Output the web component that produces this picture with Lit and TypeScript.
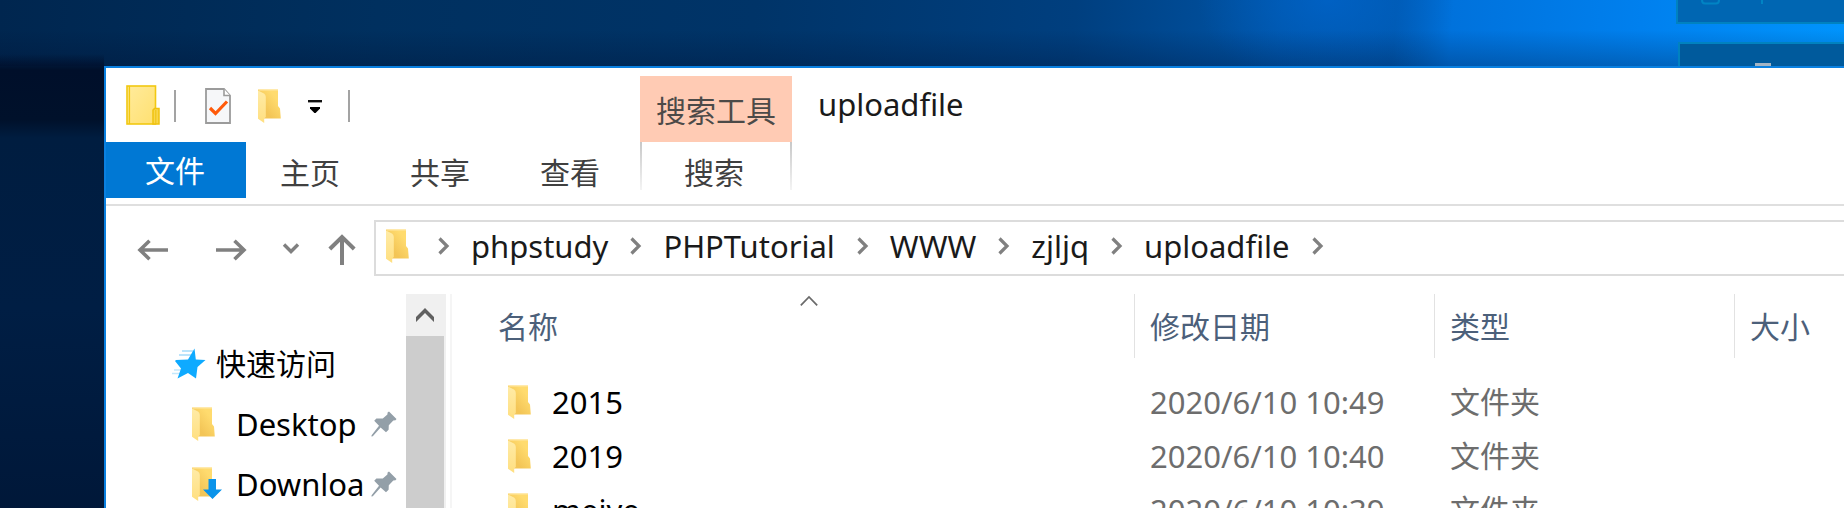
import { LitElement, html, css, svg, nothing } from "lit";
import { customElement, property } from "lit/decorators.js";

interface Entry {
  name: string;
  modified: string;
  type: string;
}

const CRUMBS = ["phpstudy", "PHPTutorial", "WWW", "zjljq", "uploadfile"];

const ENTRIES: Entry[] = [
  { name: "2015", modified: "2020/6/10 10:49", type: "文件夹" },
  { name: "2019", modified: "2020/6/10 10:40", type: "文件夹" },
  { name: "meiye", modified: "2020/6/10 10:39", type: "文件夹" },
];

const reset = css`
  * {
    box-sizing: border-box;
  }
  button {
    font: inherit;
    color: inherit;
    background: none;
    border: 0;
    padding: 0;
    margin: 0;
    display: flex;
    align-items: center;
    justify-content: center;
  }
  svg {
    display: block;
    flex: none;
    overflow: visible;
  }
`;

@customElement("folder-icon")
export class FolderIcon extends LitElement {
  @property({ type: Boolean }) download = false;

  static styles = [
    reset,
    css`
      :host {
        display: block;
        flex: none;
        width: 24px;
        height: 34px;
      }
    `,
  ];

  render() {
    return html`<svg width="24" height="34" viewBox="0 0 24 34" aria-hidden="true">
      <defs>
        <linearGradient id="back" x1="0" y1="1" x2="1" y2="0">
          <stop offset="0.3" stop-color="#f3c557" />
          <stop offset="0.75" stop-color="#ffdb6e" />
        </linearGradient>
        <linearGradient id="flap" x1="0" y1="0" x2="0" y2="1">
          <stop offset="0" stop-color="#ffeba6" />
          <stop offset="1" stop-color="#ffdf80" />
        </linearGradient>
      </defs>
      <path d="M0 0.5H20V17L22 19.5L22.8 29.5H4L0 4Z" fill="url(#back)" />
      <path d="M0 0.5H20V1.6H1Z" fill="#ffe7a4" />
      <path d="M0 1.5L6 4.6Q7.8 5.8 7.8 8V28L6.2 29.6V34L0 29.8Z" fill="url(#flap)" />
      ${this.download
        ? svg`<path d="M16.5 12H24V22.5H30L20.5 32L11 22.5H16.5Z" fill="#0a93ea" />`
        : nothing}
    </svg>`;
  }
}

@customElement("ribbon-bar")
export class RibbonBar extends LitElement {
  static styles = [
    reset,
    css`
      :host {
        display: grid;
        grid-template-columns: 534px 152px 1fr;
        grid-template-rows: 74px 56px;
        padding-bottom: 6px;
        border-bottom: 2px solid #dfdfdf;
      }
      .quick {
        display: flex;
        align-items: center;
        padding: 2px 0 0 20px;
      }
      .sep {
        width: 2px;
        height: 32px;
        margin: 0 16px 0 14px;
        background: #a3a3a3;
      }
      .tool {
        width: 52px;
        height: 48px;
      }
      .more {
        width: 38px;
      }
      .context {
        margin-top: 8px;
        padding-top: 4px;
        display: flex;
        align-items: center;
        justify-content: center;
        background: #ffcbb4;
        color: #4c4a48;
      }
      h1 {
        margin: 0;
        padding: 0 0 2px 26px;
        align-self: center;
        font-size: 31px;
        font-weight: 400;
        line-height: 40px;
        color: #1a1a1a;
      }
      .tabs {
        display: flex;
        color: #404040;
      }
      .tab {
        width: 130px;
        padding: 5px 2px 0 0;
      }
      .file {
        width: 140px;
        padding-top: 2px;
        background: #0078d4;
        color: #fff;
      }
      .search {
        width: 100%;
        padding: 5px 4px 0 0;
        color: #404040;
        background:
          linear-gradient(#c8c8c8, #f4f4f4) left top / 2px 48px no-repeat,
          linear-gradient(#c8c8c8, #f4f4f4) right top / 2px 48px no-repeat;
      }
    `,
  ];

  render() {
    return html`
      <div class="quick">
        <svg width="34" height="40" viewBox="0 0 34 40" aria-hidden="true">
          <defs>
            <linearGradient id="big" x1="0" y1="0" x2="1" y2="1">
              <stop offset="0" stop-color="#ffeb9c" />
              <stop offset="1" stop-color="#ffe070" />
            </linearGradient>
          </defs>
          <rect x="1" y="0" width="28.5" height="38" fill="url(#big)" stroke="#f2c811" stroke-width="1.6" />
          <path d="M3.4 0V38" stroke="#f2c811" stroke-width="1.4" />
          <path d="M27 38V24L28.5 22.6H33V38Z" fill="#f8d64c" stroke="#efc20f" stroke-width="1.5" />
          <path d="M29.8 24V38" stroke="#efc20f" stroke-width="1" />
        </svg>
        <span class="sep"></span>
        <button class="tool" aria-label="属性">
          <svg width="26" height="36" viewBox="0 0 26 36">
            <path d="M1 1H19L25 7.5V35H1Z" fill="#f6f7f9" stroke="#9b9b9b" stroke-width="1.8" />
            <path d="M19 1V7.5H25" fill="#fff" stroke="#9b9b9b" stroke-width="1.6" />
            <path d="M5 20L10.5 25.5L22 13.5" fill="none" stroke="#ff5a0a" stroke-width="3.2" />
          </svg>
        </button>
        <button class="tool" aria-label="新建文件夹"><folder-icon></folder-icon></button>
        <button class="tool more" aria-label="自定义快速访问工具栏">
          <svg width="14" height="14" viewBox="0 0 14 14">
            <path d="M0 2.2H14" stroke="#111" stroke-width="2.4" />
            <path d="M2 8H12V9.5L7.6 14H6.4L2 9.5Z" fill="#000" />
          </svg>
        </button>
        <span class="sep"></span>
      </div>
      <div class="context">搜索工具</div>
      <h1>uploadfile</h1>
      <div class="tabs">
        <button class="tab file">文件</button>
        <button class="tab">主页</button>
        <button class="tab">共享</button>
        <button class="tab">查看</button>
      </div>
      <button class="search">搜索</button>
    `;
  }
}

@customElement("address-bar")
export class AddressBar extends LitElement {
  static styles = [
    reset,
    css`
      :host {
        display: flex;
        padding: 14px 0 0 8px;
      }
      .nav {
        width: 78px;
        padding-top: 4px;
      }
      .recent {
        width: 42px;
        padding: 0;
      }
      .up {
        width: 60px;
        margin-right: 2px;
      }
      nav {
        flex: 1;
        min-width: 0;
        height: 56px;
        display: flex;
        align-items: center;
        padding: 0 0 4px 10px;
        border: 2px solid #dcdcdc;
        border-right: 0;
      }
      folder-icon {
        margin-right: 6px;
      }
      .step {
        width: 55px;
        height: 40px;
      }
      a {
        font-size: 31px;
        line-height: 40px;
        color: #1a1a1a;
        text-decoration: none;
      }
    `,
  ];

  private step() {
    return html`<button class="step" aria-label="展开">
      <svg width="11" height="18" viewBox="0 0 11 18">
        <path d="M1.5 1.5L9 9L1.5 16.5" fill="none" stroke="#808080" stroke-width="3.2" />
      </svg>
    </button>`;
  }

  render() {
    return html`
      <button class="nav" aria-label="返回">
        <svg width="30" height="20" viewBox="0 0 30 20">
          <path d="M30 10H2M11.5 0.8L2 10L11.5 19.2" fill="none" stroke="#808080" stroke-width="3.6" />
        </svg>
      </button>
      <button class="nav" aria-label="前进">
        <svg width="30" height="20" viewBox="0 0 30 20">
          <path d="M0 10H28M18.5 0.8L28 10L18.5 19.2" fill="none" stroke="#808080" stroke-width="3.6" />
        </svg>
      </button>
      <button class="nav recent" aria-label="最近浏览的位置">
        <svg width="16" height="10" viewBox="0 0 16 10">
          <path d="M1 1.5L8 8.5L15 1.5" fill="none" stroke="#808080" stroke-width="3.4" />
        </svg>
      </button>
      <button class="nav up" aria-label="上移">
        <svg width="26" height="30" viewBox="0 0 26 30">
          <path d="M13 30V2M0.8 14L13 2L25.2 14" fill="none" stroke="#808080" stroke-width="4" />
        </svg>
      </button>
      <nav aria-label="地址">
        <folder-icon></folder-icon>
        ${this.step()}${CRUMBS.map((c) => html`<a href="#${c}">${c}</a>${this.step()}`)}
      </nav>
    `;
  }
}

@customElement("side-bar")
export class SideBar extends LitElement {
  static styles = [
    reset,
    css`
      :host {
        display: flex;
        flex: none;
        border-right: 2px solid #f5f5f5;
        padding-right: 4px;
      }
      ul {
        list-style: none;
        margin: 0;
        padding: 40px 9px 0 64px;
        width: 300px;
      }
      li {
        height: 60px;
        display: flex;
        align-items: center;
        color: #000;
      }
      .root {
        gap: 10px;
      }
      .child {
        padding-left: 22px;
        font-size: 31px;
      }
      .label {
        flex: 1;
        min-width: 0;
        margin: 0 6px 0 20px;
        line-height: 40px;
        overflow: hidden;
        white-space: nowrap;
      }
      .scroll {
        width: 40px;
        background: #f0f0f0;
        display: flex;
        flex-direction: column;
      }
      .scroll button {
        height: 42px;
        padding-right: 2px;
      }
      .thumb {
        flex: 1;
        margin-right: 2px;
        background: #cdcdcd;
      }
    `,
  ];

  private child(label: string, download: boolean) {
    return html`<li class="child">
      <folder-icon ?download=${download}></folder-icon>
      <span class="label">${label}</span>
      <svg width="26" height="26" viewBox="0 0 26 26" aria-hidden="true">
        <path
          d="M18 0.5L25.5 8L24.5 9.2L22.3 9.4L17.8 14.2L17.6 18.8L15 21.2L9.6 16.4L1.8 25.2L0.4 25.6L0.6 24.2L8 14.8L3.2 9.8L5.4 7.4L11.8 7.6L16.4 3.6L16.6 1.6Z"
          fill="#939fa8"
        />
      </svg>
    </li>`;
  }

  render() {
    return html`
      <ul>
        <li class="root">
          <svg width="36" height="32" viewBox="0 0 36 32" aria-hidden="true">
            <path d="M12 3H23M9 7H21" stroke="#a5dcfa" stroke-width="1.5" />
            <path d="M4 22H12M2 25.5H10" stroke="#c4e8fc" stroke-width="1.5" />
            <path
              d="M24.5 0.5L25.8 11.5L35.5 12L27.5 19L26 30.5L18 25L7.5 30.5L11 20.5L5 13L6 12L18 11.5Z"
              fill="#0eaaff"
            />
          </svg>
          快速访问
        </li>
        ${this.child("Desktop", false)}${this.child("Downloa", true)}
      </ul>
      <div class="scroll">
        <button aria-label="向上滚动">
          <svg width="18" height="14" viewBox="0 0 18 14">
            <path d="M0 9L9 0L18 9V14L9 5L0 14Z" fill="#606060" />
          </svg>
        </button>
        <div class="thumb"></div>
      </div>
    `;
  }
}

@customElement("file-list")
export class FileList extends LitElement {
  static styles = [
    reset,
    css`
      :host {
        display: block;
        flex: 1;
        min-width: 0;
        padding-left: 31px;
      }
      table {
        width: 100%;
        table-layout: fixed;
        border-collapse: separate;
        border-spacing: 0;
        white-space: nowrap;
      }
      .c-name {
        width: 651px;
      }
      .c-mid {
        width: 300px;
      }
      th {
        position: relative;
        height: 64px;
        padding: 2px 0 0 15px;
        border-left: 1px solid #e2e2e2;
        font-weight: 400;
        text-align: left;
        color: #4c607a;
      }
      th:first-child {
        border-left: 0;
      }
      .sort {
        position: absolute;
        top: 2px;
        left: calc(50% - 9px);
      }
      tbody::before {
        content: "";
        display: block;
        height: 18px;
      }
      td {
        height: 54px;
        padding: 0 0 2px 16px;
        color: #6d6d6d;
        line-height: 40px;
      }
      td:first-child {
        padding-left: 25px;
        color: #000;
      }
      .latin {
        font-size: 31px;
      }
      .entry {
        display: flex;
        align-items: center;
        gap: 20px;
      }
    `,
  ];

  render() {
    return html`<table>
      <colgroup>
        <col class="c-name" />
        <col class="c-mid" />
        <col class="c-mid" />
        <col />
      </colgroup>
      <thead>
        <tr>
          <th aria-sort="ascending">
            名称
            <svg class="sort" width="18" height="10" viewBox="0 0 18 10" aria-hidden="true">
              <path d="M0.8 9.4L9 1L17.2 9.4" fill="none" stroke="#6a6a6a" stroke-width="1.7" />
            </svg>
          </th>
          <th>修改日期</th>
          <th>类型</th>
          <th>大小</th>
        </tr>
      </thead>
      <tbody>
        ${ENTRIES.map(
          (e) => html`<tr>
            <td class="latin"><div class="entry"><folder-icon></folder-icon>${e.name}</div></td>
            <td class="latin">${e.modified}</td>
            <td>${e.type}</td>
            <td></td>
          </tr>`
        )}
      </tbody>
    </table>`;
  }
}

@customElement("app-root")
export class AppRoot extends LitElement {
  static styles = [
    reset,
    css`
      :host {
        display: flex;
        position: relative;
        height: 100vh;
        overflow: hidden;
        padding: 66px 0 0 104px;
        box-sizing: border-box;
        font-family: "Noto Sans", "Noto Sans CJK SC", sans-serif;
        font-size: 30px;
        line-height: 40px;
        background:
          linear-gradient(transparent 30px, rgba(0, 10, 40, 0.25) 66px) top / 100% 66px no-repeat,
          linear-gradient(
              rgba(0, 15, 40, 0),
              #000f2a 16px,
              #00112b 66px,
              #001d40 84px,
              #001e44 50%,
              #001636
            )
            left 54px / 104px 100% no-repeat,
          radial-gradient(ellipse 130px 90px at 72% 0, rgba(0, 104, 212, 0.6), transparent),
          linear-gradient(
            95deg,
            #00264f,
            #00305f 20%,
            #003468 40%,
            #003f7f 57%,
            #0054a6 68%,
            #0058ae 74%,
            #0072dc 77%,
            #0080ee 87%,
            #0098ff
          );
      }
      .panel {
        position: absolute;
        right: 0;
        width: 168px;
        height: 24px;
        top: 0;
        background: #0066b2;
        border: solid #0082c0;
        border-width: 0 0 2px 2px;
      }
      .panel svg {
        margin-left: 22px;
      }
      .lower {
        top: 42px;
        width: 166px;
        background: #005a9c;
        border-width: 2px 0 0 2px;
      }
      .dash {
        margin: 19px 0 0 75px;
        width: 16px;
        height: 3px;
        background: #a3b4c4;
      }
      .window {
        position: relative;
        flex: 1;
        min-width: 0;
        display: flex;
        flex-direction: column;
        background: #fff;
        border: solid #0a80e0;
        border-width: 2px 0 0 2px;
      }
      .body {
        flex: 1;
        min-height: 0;
        display: flex;
        margin-top: 18px;
      }
    `,
  ];

  render() {
    return html`
      <div class="panel">
        <svg width="64" height="5" viewBox="0 0 64 5" aria-hidden="true">
          <path d="M2 0Q2 3.5 5 3.5H16Q19 3.5 19 0M62 0V4" fill="none" stroke="#0084c4" stroke-width="2" />
        </svg>
      </div>
      <div class="panel lower"><div class="dash"></div></div>
      <main class="window">
        <ribbon-bar></ribbon-bar>
        <address-bar></address-bar>
        <div class="body">
          <side-bar></side-bar>
          <file-list></file-list>
        </div>
      </main>
    `;
  }
}
